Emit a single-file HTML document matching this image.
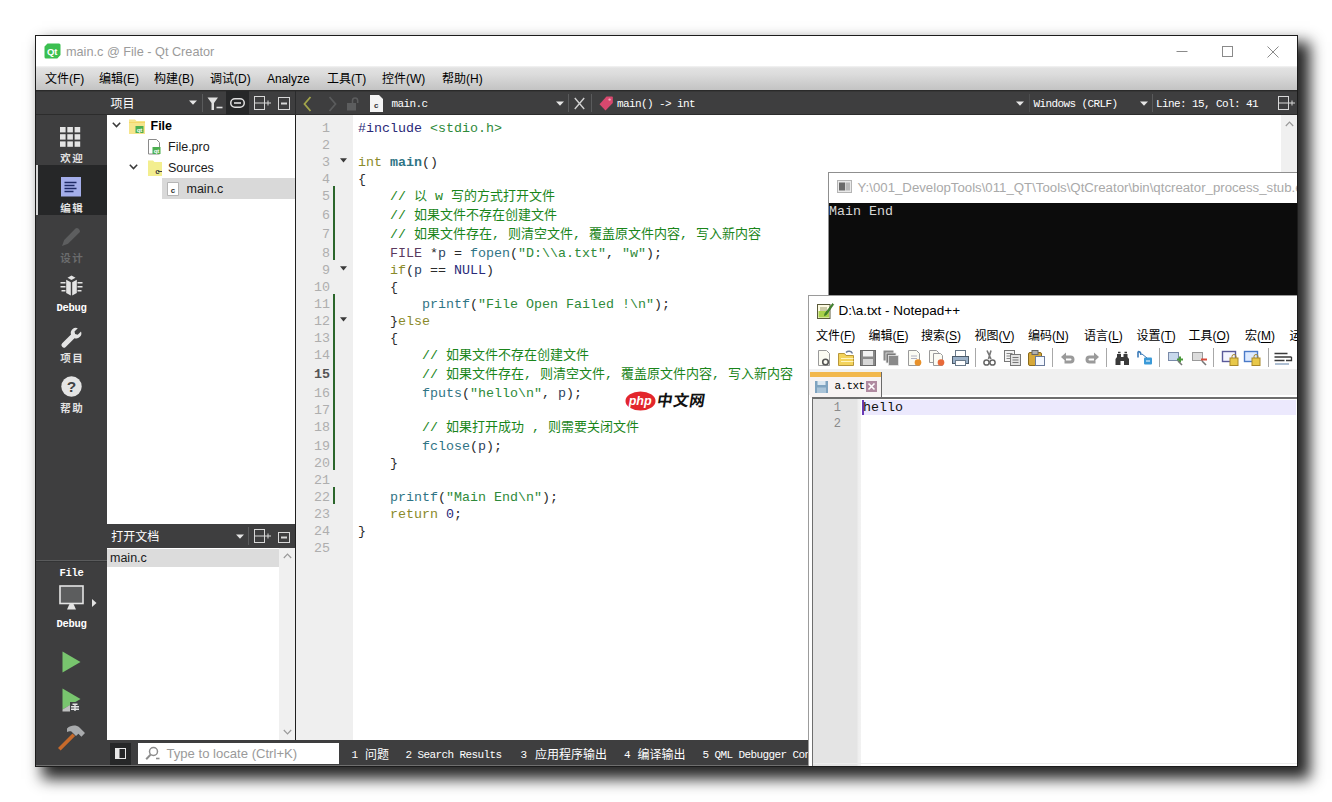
<!DOCTYPE html>
<html lang="zh-CN">
<head>
<meta charset="utf-8">
<title>main.c @ File - Qt Creator</title>
<style>
*{box-sizing:border-box;margin:0;padding:0}
html,body{width:1332px;height:802px;overflow:hidden;background:#fff}
body{position:relative;font-family:"Liberation Sans","Noto Sans CJK SC",sans-serif;font-size:13px;color:#000}
.abs,.abs-all *{position:absolute}
#win{position:absolute;left:36px;top:36px;width:1261px;height:730px;background:#fff;box-shadow:0 0 0 1px #1c1c1c,9.5px 9.5px 14px 3.5px rgba(0,0,0,.85);overflow:hidden}
#win>div,#win>svg{position:absolute}
.t{position:absolute;white-space:nowrap;line-height:1}
/* coordinates inside #win are page coords minus 36 */
#titlebar{left:0;top:0;width:1261px;height:30px;background:#fff}
#menubar{left:0;top:30px;width:1261px;height:24px;background:linear-gradient(#f4f4f4 0,#e2e2e2 2px,#dcdcdc 8px,#c3c3c3 100%)}
#toolbar{left:0;top:54px;width:1261px;height:25px;background:#3e3e3f;border-top:1px solid #2a2a2a;border-bottom:1px solid #2c2c2c;box-shadow:inset 0 3px 0 -2px #363636}
#sidebar{left:0;top:79px;width:71px;height:652px;background:#3e3e3f}
#tree{left:71px;top:79px;width:188px;height:409px;background:#fff}
#docshead{left:71px;top:488px;width:188px;height:24px;background:#3e3e3f}
#docs{left:71px;top:512px;width:188px;height:192px;background:#fff}
#split{left:259px;top:79px;width:1px;height:625px;background:#1f1f1f}
#gutter{left:260px;top:79px;width:57px;height:625px;background:#efefef}
#code{left:317px;top:79px;width:944px;height:625px;background:#fff}
#bottombar{left:71px;top:704px;width:1190px;height:25px;background:#3e3e3f}
#botline{left:0;top:729px;width:1261px;height:1px;background:#6f6f6f}

.g{color:#9a9a9a}
.w{color:#fff}
.mi{position:absolute;top:7px;font-size:12px;line-height:12px;white-space:nowrap;color:#000}
.tb{position:absolute;white-space:nowrap;color:#fff;font-size:12px;line-height:12px}
.mono{font-family:"Liberation Mono","Noto Sans CJK SC",monospace}
.ser{font-family:"Liberation Serif","Noto Serif CJK SC",serif}

.sm{position:absolute;white-space:nowrap;color:#fff;font-family:"Liberation Mono","Noto Sans CJK SC",monospace;font-size:11px;letter-spacing:-0.6px;line-height:12px}
.cj{position:absolute;white-space:nowrap;color:#fff;font-family:"Noto Sans CJK SC","Liberation Sans",sans-serif;font-size:12px;line-height:12px}
.sep{position:absolute;width:1px;background:#5a5b5c}
.ic{position:absolute;overflow:visible}

.ml{position:absolute;left:0;width:71px;text-align:center;white-space:nowrap;color:#e2e2e2;font-weight:bold;font-size:10.5px;letter-spacing:1.5px;text-indent:1.5px;line-height:12px;font-family:"Noto Sans CJK SC","Liberation Sans",sans-serif}
.mlm{position:absolute;left:0;width:71px;text-align:center;white-space:nowrap;color:#fff;font-weight:bold;font-family:"Liberation Mono",monospace;font-size:10.5px;letter-spacing:-0.3px;line-height:12px}

.tr{position:absolute;white-space:nowrap;font-size:12.5px;line-height:14px;color:#1a1a1a}
.ln{position:absolute;left:0;width:34px;text-align:right;height:17.47px;line-height:17.47px;font-family:"Liberation Mono",monospace;font-size:13.33px;color:#aeaeae;white-space:pre}
.cl{position:absolute;left:5px;height:17.47px;line-height:17.47px;font-family:"Liberation Mono","Noto Sans CJK SC",monospace;font-size:13.33px;color:#2b2b2b;white-space:pre}
.cl i{line-height:0;font-style:normal;font-family:"Noto Sans CJK SC",sans-serif;font-size:13px}
.k{color:#8a8a2a}.s{color:#2e8a3a}.c{color:#1a851a}.p{color:#2a2a78}.f{color:#2f7485}.ty{color:#5a3a5e}.v{color:#2a3f62}
.bar{position:absolute;left:37px;width:2px;background:#2b662b}
.fold{position:absolute;left:44px}

#con{left:792px;top:136px;width:469px;height:124px;background:#0c0c0c;border-left:1px solid #8f8f8f;border-top:1px solid #8f8f8f}
#con>*{position:absolute}
#npp{left:772px;top:259px;width:489px;height:472px;background:#fff;border-left:1px solid #9c9c9c;border-top:1px solid #9a9a9a}
#npp>*{position:absolute}
.nm{position:absolute;top:33px;font-size:12px;line-height:14px;white-space:nowrap;color:#000}
.nm u{text-decoration-thickness:1px;text-underline-offset:1.5px}
#wm{left:588px;top:354px;width:84px;height:22px}
#wm>*{position:absolute}
</style>
</head>
<body>
<div id="win">
  <div id="titlebar">
    <svg style="position:absolute;left:7.5px;top:6.5px" width="17" height="16" viewBox="0 0 17 16"><path d="M3.5 0.5H15a1.5 1.5 0 0 1 1.5 1.5V12l-3.2 3.5H2a1.5 1.5 0 0 1-1.5-1.5V3.5z" fill="#3bbf50"/><text x="8.2" y="11.6" font-family="Liberation Sans,sans-serif" font-weight="bold" font-size="9.5" fill="#fff" text-anchor="middle">Qt</text></svg>
    <div class="t" id="ttl" style="left:30px;top:9px;font-size:12.7px;line-height:14px;color:#9b9b9b">main.c @ File - Qt Creator</div>
    <svg style="position:absolute;left:1140px;top:9px" width="110" height="14" viewBox="0 0 110 14" fill="none" stroke="#8a8a8a" stroke-width="1"><path d="M0.5 6.5H11.5"/><rect x="46.5" y="1.5" width="10" height="10"/><path d="M91.5 1.5l11 11M102.5 1.5l-11 11"/></svg>
  </div>
  <div id="menubar">
    <div class="mi" style="left:9px">文件(F)</div>
    <div class="mi" style="left:63px">编辑(E)</div>
    <div class="mi" style="left:118px">构建(B)</div>
    <div class="mi" style="left:174px">调试(D)</div>
    <div class="mi" style="left:231px">Analyze</div>
    <div class="mi" style="left:291px">工具(T)</div>
    <div class="mi" style="left:346px">控件(W)</div>
    <div class="mi" style="left:406px">帮助(H)</div>
  </div>
  <div id="toolbar">
    <div class="cj" style="left:74.5px;top:6px">项目</div>
    <svg class="ic" style="left:153px;top:9px" width="8" height="5" viewBox="0 0 8 5"><path d="M0 0.5h8L4 4.8z" fill="#e6e6e6"/></svg>
    <div class="sep" style="left:166px;top:3px;height:18px"></div>
    <svg class="ic" style="left:171px;top:6px" width="16" height="14" viewBox="0 0 16 14"><path d="M0.5 0.5h10.5L7 6v7H4.5V6z" fill="#e0e0e0"/><path d="M9.5 10.5h6" stroke="#e0e0e0" stroke-width="1.6"/></svg>
    <div style="position:absolute;left:190px;top:0;width:23px;height:24px;background:#262728"></div>
    <svg class="ic" style="left:194px;top:7px" width="15" height="10" viewBox="0 0 15 10" fill="none" stroke="#e0e0e0"><rect x="0.75" y="0.75" width="13.5" height="8.5" rx="4.2" stroke-width="1.5"/><path d="M4 5H11" stroke-width="1.6"/></svg>
    <svg class="ic" style="left:218px;top:5px" width="18" height="14" viewBox="0 0 18 14" fill="none" stroke="#d8d8d8" stroke-width="1"><rect x="0.5" y="0.5" width="10" height="13"/><path d="M0.5 7H10.5M11 7H17M14 4.5V9.5"/></svg>
    <svg class="ic" style="left:241.5px;top:6px" width="12" height="13" viewBox="0 0 12 13" fill="none" stroke="#d8d8d8" stroke-width="1"><rect x="0.5" y="0.5" width="11" height="12"/><path d="M3 6.5H9" stroke-width="2"/></svg>
    <div style="position:absolute;left:259px;top:0;width:1px;height:24px;background:#2a2b2c"></div>
    <svg class="ic" style="left:267px;top:5px" width="9" height="16" viewBox="0 0 9 16" fill="none"><path d="M7.5 1L1.5 8l6 7" stroke="#a3a54a" stroke-width="1.8"/></svg>
    <svg class="ic" style="left:292px;top:5px" width="9" height="16" viewBox="0 0 9 16" fill="none"><path d="M1.5 1l6 7-6 7" stroke="#5a5b5c" stroke-width="1.8"/></svg>
    <svg class="ic" style="left:310px;top:6px" width="13" height="14" viewBox="0 0 13 14" fill="none"><rect x="1" y="6" width="9" height="7.5" fill="#5c5d5e"/><path d="M6.5 6V3.5a2.6 2.6 0 0 1 5.2 0V6" stroke="#5c5d5e" stroke-width="1.5"/></svg>
    <svg class="ic" style="left:334px;top:4px" width="13" height="17" viewBox="0 0 13 17"><path d="M0 0h9l4 4v13H0z" fill="#f4f4f4"/><text x="6.3" y="12.5" font-family="Liberation Sans,sans-serif" font-weight="bold" font-size="8" fill="#333" text-anchor="middle">c</text></svg>
    <div class="sm" style="left:355.5px;top:7px">main.c</div>
    <svg class="ic" style="left:519.5px;top:10px" width="8" height="5" viewBox="0 0 8 5"><path d="M0 0.5h8L4 4.8z" fill="#e6e6e6"/></svg>
    <div class="sep" style="left:532px;top:3px;height:18px"></div>
    <svg class="ic" style="left:538px;top:6px" width="11" height="13" viewBox="0 0 11 13" fill="none" stroke="#d0d0d0" stroke-width="1.4"><path d="M0.8 1l9.4 11M10.2 1L0.8 12"/></svg>
    <div class="sep" style="left:555px;top:3px;height:18px"></div>
    <svg class="ic" style="left:563px;top:5px" width="14" height="15" viewBox="0 0 14 15"><path d="M7.5 0.5h5.5a0.8 0.8 0 0 1 .8.8V7L6.5 14.5.5 8.2z" fill="#d9486e"/><circle cx="10.6" cy="3.6" r="1.2" fill="#f3a6b8"/></svg>
    <div class="sm" style="left:581px;top:7px">main() -&gt; int</div>
    <svg class="ic" style="left:980px;top:10px" width="8" height="5" viewBox="0 0 8 5"><path d="M0 0.5h8L4 4.8z" fill="#e6e6e6"/></svg>
    <div class="sep" style="left:993px;top:3px;height:18px;background:#4c4d4e"></div>
    <div class="sm" style="left:997.5px;top:7px">Windows (CRLF)</div>
    <svg class="ic" style="left:1103.5px;top:10px" width="8" height="5" viewBox="0 0 8 5"><path d="M0 0.5h8L4 4.8z" fill="#e6e6e6"/></svg>
    <div class="sep" style="left:1116px;top:3px;height:18px"></div>
    <div class="sm" style="left:1120px;top:7px">Line: 15, Col: 41</div>
    <svg class="ic" style="left:1242px;top:5px" width="18" height="14" viewBox="0 0 18 14" fill="none" stroke="#d8d8d8" stroke-width="1"><rect x="0.5" y="0.5" width="10" height="13"/><path d="M0.5 7H10.5M11 7H17M14 4.5V9.5"/></svg>
  </div>
  <div id="sidebar">
    <svg class="ic" style="left:24px;top:11.5px" width="21" height="20" viewBox="0 0 21 20" fill="#e4e4e4"><rect x="0.0" y="0.0" width="5.6" height="5.4"/><rect x="7.3" y="0.0" width="5.6" height="5.4"/><rect x="14.6" y="0.0" width="5.6" height="5.4"/><rect x="0.0" y="7.2" width="5.6" height="5.4"/><rect x="7.3" y="7.2" width="5.6" height="5.4"/><rect x="14.6" y="7.2" width="5.6" height="5.4"/><rect x="0.0" y="14.4" width="5.6" height="5.4"/><rect x="7.3" y="14.4" width="5.6" height="5.4"/><rect x="14.6" y="14.4" width="5.6" height="5.4"/></svg>
    <div class="ml" style="top:37px">欢迎</div>
    <div style="position:absolute;left:0;top:50px;width:71px;height:49.5px;background:#262728"></div>
    <div style="position:absolute;left:0;top:50px;width:2px;height:49.5px;background:#d8d8d8"></div>
    <svg class="ic" style="left:24.5px;top:61.5px" width="20" height="20" viewBox="0 0 20 20"><rect width="20" height="19.5" fill="#a4aeea"/><path d="M3.5 5.5h12M3.5 8.5h10M3.5 11.5h12M3.5 14.5h9" stroke="#1e2a66" stroke-width="1.3"/></svg>
    <div class="ml" style="top:87px">编辑</div>
    <svg class="ic" style="left:24px;top:111px" width="22" height="22" viewBox="0 0 22 22"><path d="M2 20l2.2-6L15.5 2.6a2 2 0 0 1 2.8 0l1.1 1.1a2 2 0 0 1 0 2.8L8 17.8z" fill="#5d5e5f"/></svg>
    <div class="ml" style="top:137px;color:#6b6c6d">设计</div>
    <svg class="ic" style="left:24px;top:160px" width="23" height="22" viewBox="0 0 23 22" fill="#e4e4e4"><path d="M11.5 0.5l4 2.2-4 2.2-4-2.2z"/><path d="M6.2 4.8l4.6 2.4v13.3l-4.6-2.6z"/><path d="M16.8 4.8l-4.6 2.4v13.3l4.6-2.6z"/><path d="M0.5 7h5v1.6h-5zM0.5 11h5v1.6h-5zM1.5 15h4v1.6h-4zM17.5 7h5v1.6h-5zM17.5 11h5v1.6h-5zM17.5 15h4v1.6h-4z"/></svg>
    <div class="mlm" style="top:187px">Debug</div>
    <svg class="ic" style="left:24px;top:211px" width="22" height="22" viewBox="0 0 22 22"><path d="M2.2 17.3L11 8.6a5.2 5.2 0 0 1 6.8-6.4l-3.3 3.3 0.6 2.6 2.6 0.6 3.3-3.3a5.2 5.2 0 0 1-6.5 6.8L5.7 20.9a2.4 2.4 0 0 1-3.5-3.6z" fill="#e4e4e4"/></svg>
    <div class="ml" style="top:237px">项目</div>
    <svg class="ic" style="left:25px;top:261px" width="21" height="21" viewBox="0 0 21 21"><circle cx="10.5" cy="10.5" r="10.2" fill="#e4e4e4"/><text x="10.5" y="16" font-family="Liberation Sans,sans-serif" font-weight="bold" font-size="15.5" fill="#404244" text-anchor="middle">?</text></svg>
    <div class="ml" style="top:287px">帮助</div>
    <div style="position:absolute;left:0;top:445px;width:71px;height:1px;background:#5a5b5c"></div>
    <div style="position:absolute;left:0;top:446px;width:71px;height:1px;background:#333435"></div>
    <div class="mlm" style="top:452px">File</div>
    <svg class="ic" style="left:23px;top:470px" width="25" height="25" viewBox="0 0 25 25"><rect x="1" y="1" width="23" height="17.5" fill="#5c5d5e" stroke="#e4e4e4" stroke-width="1.6"/><path d="M8 24.5l2.5-5.5h4l2.5 5.5z" fill="#e4e4e4"/></svg>
    <svg class="ic" style="left:55.5px;top:484px" width="5" height="8" viewBox="0 0 5 8"><path d="M0 0l4.5 4L0 8z" fill="#e4e4e4"/></svg>
    <div class="mlm" style="top:503px">Debug</div>
    <svg class="ic" style="left:25.5px;top:536px" width="19" height="22" viewBox="0 0 19 22"><path d="M0.5 0.5L18.5 11 0.5 21.5z" fill="#78c56e"/></svg>
    <svg class="ic" style="left:25.5px;top:573px" width="20" height="24" viewBox="0 0 20 24"><path d="M0.5 0.5L18.5 11 0.5 21.5z" fill="#78c56e"/><path d="M0.5 21.5L8 17v6.5H0.5z" fill="#bfc0c0"/><rect x="8" y="14" width="10" height="9.5" fill="#404244"/><path d="M10.5 15.5h5v1.5h-5zM9 18h8v1.4H9zM9 20.6h8V22H9zM12.3 15.5h1.4V23h-1.4z" fill="#e4e4e4"/></svg>
    <svg class="ic" style="left:20px;top:610px" width="30" height="27" viewBox="0 0 30 27"><path d="M2 24.5L16.5 10l2.6 2.6L4.6 27z" fill="#c76a2b" transform="translate(0,-1.5)"/><path d="M11 4.5c4-3.5 9-3.8 12.5-1l5.5 5.6-3.6 3.6-3-3-2.4 2.4-4.6-4.6c-1.4-0.6-2.8-0.4-4.4 0.4z" fill="#a9abad" transform="translate(0,-1)"/></svg>
  </div>
  <div id="tree">
    <svg class="ic" style="left:4.5px;top:7px" width="9" height="6" viewBox="0 0 9 6" fill="none"><path d="M0.8 0.8L4.5 4.6 8.2 0.8" stroke="#3a3a3a" stroke-width="1.5"/></svg>
    <svg class="ic" style="left:21.5px;top:3px" width="16" height="17" viewBox="0 0 16 17"><path d="M0 1.5h6l1.5 1.5H16v13H0z" fill="#f6e58d"/><path d="M0 4.5h16" stroke="#f3d76a"/><rect x="6.5" y="8" width="8" height="7" fill="#4caf50"/><text x="10.5" y="14" font-size="6" font-family="Liberation Sans,sans-serif" fill="#fff" text-anchor="middle" font-weight="bold">qt</text></svg>
    <div class="tr" style="left:43.5px;top:4px;font-weight:bold;color:#000">File</div>
    <svg class="ic" style="left:41px;top:23.5px" width="13" height="16" viewBox="0 0 13 16"><path d="M0.5 0.5h8l3 3v11.5h-11z" fill="#fff" stroke="#8a8a8a"/><rect x="4.5" y="8" width="8" height="7" fill="#4caf50"/><text x="8.5" y="14" font-size="6" font-family="Liberation Sans,sans-serif" fill="#fff" text-anchor="middle" font-weight="bold">qt</text></svg>
    <div class="tr" style="left:61px;top:25px">File.pro</div>
    <svg class="ic" style="left:22px;top:49px" width="9" height="6" viewBox="0 0 9 6" fill="none"><path d="M0.8 0.8L4.5 4.6 8.2 0.8" stroke="#3a3a3a" stroke-width="1.5"/></svg>
    <svg class="ic" style="left:40.5px;top:45px" width="14" height="16" viewBox="0 0 14 16"><path d="M0 0.5h5l1.5 1.5H14v14H0z" fill="#f3ee8f"/><text x="9.5" y="14" font-size="8" font-family="Liberation Sans,sans-serif" fill="#444" text-anchor="middle" font-weight="bold">c</text><path d="M10 11.5h4" stroke="#444"/></svg>
    <div class="tr" style="left:61px;top:46px">Sources</div>
    <div style="position:absolute;left:55px;top:63px;width:133px;height:21px;background:#d9d9d9"></div>
    <svg class="ic" style="left:60px;top:66.5px" width="12" height="14" viewBox="0 0 12 14"><path d="M0.5 0.5h11v13h-11z" fill="#fff" stroke="#b5b5b5"/><text x="6" y="10.5" font-size="8" font-family="Liberation Sans,sans-serif" fill="#333" text-anchor="middle" font-weight="bold">c</text></svg>
    <div class="tr" style="left:79.5px;top:67px">main.c</div>
  </div>
  <div id="docshead">
    <div class="cj" style="left:4.3px;top:6px">打开文档</div>
    <svg class="ic" style="left:128.5px;top:9.5px" width="8" height="5" viewBox="0 0 8 5"><path d="M0 0.5h8L4 4.8z" fill="#e6e6e6"/></svg>
    <div class="sep" style="left:141px;top:3px;height:18px"></div>
    <svg class="ic" style="left:147px;top:5px" width="18" height="14" viewBox="0 0 18 14" fill="none" stroke="#d8d8d8" stroke-width="1"><rect x="0.5" y="0.5" width="10" height="13"/><path d="M0.5 7H10.5M11 7H17M14 4.5V9.5"/></svg>
    <svg class="ic" style="left:171px;top:7.5px" width="12" height="11" viewBox="0 0 12 11" fill="none" stroke="#d8d8d8" stroke-width="1"><rect x="0.5" y="0.5" width="11" height="10"/><path d="M3 5.5H9" stroke-width="2"/></svg>
  </div>
  <div id="docs">
    <div style="position:absolute;left:0;top:1px;width:172px;height:18px;background:#dcdcdc"></div>
    <div class="tr" style="left:3px;top:2.5px">main.c</div>
    <div style="position:absolute;left:172px;top:0;width:16px;height:192px;background:#f0f0f0"></div>
    <svg class="ic" style="left:176px;top:5px" width="9" height="6" viewBox="0 0 9 6" fill="none"><path d="M0.8 5L4.5 1.2 8.2 5" stroke="#9a9a9a" stroke-width="1.2"/></svg>
    <svg class="ic" style="left:176px;top:180.5px" width="9" height="6" viewBox="0 0 9 6" fill="none"><path d="M0.8 1L4.5 4.8 8.2 1" stroke="#9a9a9a" stroke-width="1.2"/></svg>
  </div>
  <div id="split"></div>
  <div id="gutter">
    <div class="ln" style="top:5.00px">1</div>
    <div class="ln" style="top:22.00px">2</div>
    <div class="ln" style="top:39.00px">3</div>
    <div class="ln" style="top:56.00px">4</div>
    <div class="ln" style="top:73.00px">5</div>
    <div class="ln" style="top:92.00px">6</div>
    <div class="ln" style="top:111.00px">7</div>
    <div class="ln" style="top:130.00px">8</div>
    <div class="ln" style="top:147.00px">9</div>
    <div class="ln" style="top:164.00px">10</div>
    <div class="ln" style="top:181.00px">11</div>
    <div class="ln" style="top:198.00px">12</div>
    <div class="ln" style="top:215.00px">13</div>
    <div class="ln" style="top:232.00px">14</div>
    <div class="ln" style="top:251.00px;color:#555;font-weight:bold">15</div>
    <div class="ln" style="top:270.00px">16</div>
    <div class="ln" style="top:287.00px">17</div>
    <div class="ln" style="top:304.00px">18</div>
    <div class="ln" style="top:323.00px">19</div>
    <div class="ln" style="top:340.00px">20</div>
    <div class="ln" style="top:357.00px">21</div>
    <div class="ln" style="top:374.00px">22</div>
    <div class="ln" style="top:391.00px">23</div>
    <div class="ln" style="top:408.00px">24</div>
    <div class="ln" style="top:425.00px">25</div>
    <div class="bar" style="top:71.00px;height:74.00px"></div>
    <div class="bar" style="top:179.00px;height:176.00px"></div>
    <div class="bar" style="top:372.00px;height:17.00px"></div>
    <svg class="ic fold" style="top:43.30px" width="7" height="5" viewBox="0 0 7 5"><path d="M0 0.3h7L3.5 4.6z" fill="#3a3a3a"/></svg>
    <svg class="ic fold" style="top:151.30px" width="7" height="5" viewBox="0 0 7 5"><path d="M0 0.3h7L3.5 4.6z" fill="#3a3a3a"/></svg>
    <svg class="ic fold" style="top:202.30px" width="7" height="5" viewBox="0 0 7 5"><path d="M0 0.3h7L3.5 4.6z" fill="#3a3a3a"/></svg>
  </div>
  <div id="code">
    <div class="cl" style="top:5.00px"><span class="p">#include</span> <span class="s">&lt;stdio.h&gt;</span></div>
    <div class="cl" style="top:39.00px"><span class="k">int</span> <b class="f">main</b>()</div>
    <div class="cl" style="top:56.00px">{</div>
    <div class="cl" style="top:73.00px">    <span class="c">// <i>以</i> w <i>写的方式打开文件</i></span></div>
    <div class="cl" style="top:92.00px">    <span class="c">// <i>如果文件不存在创建文件</i></span></div>
    <div class="cl" style="top:111.00px">    <span class="c">// <i>如果文件存在</i>, <i>则清空文件</i>, <i>覆盖原文件内容</i>, <i>写入新内容</i></span></div>
    <div class="cl" style="top:130.00px">    <span class="ty">FILE</span> *<span class="v">p</span> = <span class="f">fopen</span>(<span class="s">"D:\\a.txt"</span>, <span class="s">"w"</span>);</div>
    <div class="cl" style="top:147.00px">    <span class="k">if</span>(<span class="v">p</span> == <span class="p">NULL</span>)</div>
    <div class="cl" style="top:164.00px">    {</div>
    <div class="cl" style="top:181.00px">        <span class="f">printf</span>(<span class="s">"File Open Failed !\n"</span>);</div>
    <div class="cl" style="top:198.00px">    }<span class="k">else</span></div>
    <div class="cl" style="top:215.00px">    {</div>
    <div class="cl" style="top:232.00px">        <span class="c">// <i>如果文件不存在创建文件</i></span></div>
    <div class="cl" style="top:251.00px">        <span class="c">// <i>如果文件存在</i>, <i>则清空文件</i>, <i>覆盖原文件内容</i>, <i>写入新内容</i></span></div>
    <div class="cl" style="top:270.00px">        <span class="f">fputs</span>(<span class="s">"hello\n"</span>, <span class="v">p</span>);</div>
    <div class="cl" style="top:304.00px">        <span class="c">// <i>如果打开成功</i> , <i>则需要关闭文件</i></span></div>
    <div class="cl" style="top:323.00px">        <span class="f">fclose</span>(<span class="v">p</span>);</div>
    <div class="cl" style="top:340.00px">    }</div>
    <div class="cl" style="top:374.00px">    <span class="f">printf</span>(<span class="s">"Main End\n"</span>);</div>
    <div class="cl" style="top:391.00px">    <span class="k">return</span> <span class="p">0</span>;</div>
    <div class="cl" style="top:408.00px">}</div>
    <div style="position:absolute;left:927.5px;top:0;width:16.5px;height:627px;background:#f0f0f0"></div>
    <svg class="ic" style="left:931.5px;top:5.5px" width="9" height="6" viewBox="0 0 9 6" fill="none"><path d="M0.8 5L4.5 1.2 8.2 5" stroke="#9a9a9a" stroke-width="1.2"/></svg>
  </div>
  <div id="con">
    <div style="left:0;top:0;width:468px;height:30px;background:#fff"></div>
    <svg class="ic" style="left:8px;top:7px" width="15" height="13" viewBox="0 0 15 13"><rect x="0.5" y="0.5" width="14" height="12" fill="#e9e9e9" stroke="#b4b4b4"/><rect x="2" y="2.5" width="6" height="8" fill="#6a6a6a"/><rect x="8.5" y="2.5" width="4.5" height="8" fill="#b9b9b9"/></svg>
    <div class="t" id="contitle" style="left:28.5px;top:8px;font-size:13.22px;line-height:14px;color:#a9a9a9">Y:\001_DevelopTools\011_QT\Tools\QtCreator\bin\qtcreator_process_stub.exe</div>
    <div class="t mono" id="context" style="left:0;top:31px;font-size:13.33px;line-height:16px;color:#d6d6d6">Main End</div>
  </div>
  <div id="wm">
    <svg class="ic" style="left:0.8px;top:0.5px" width="31" height="20" viewBox="0 0 31 20"><ellipse cx="15.500" cy="10" rx="15" ry="9.600" fill="#e3262c"/><text x="15.200" y="13.800" font-family="Liberation Sans,sans-serif" font-style="italic" font-weight="bold" font-size="12.500" fill="#fff" text-anchor="middle">php</text></svg>
    <div class="t" style="left:33px;top:2.5px;font-size:15.6px;line-height:16px;font-weight:bold;transform:skewX(-9deg);letter-spacing:.6px;color:#111;font-family:'Liberation Sans','Noto Sans CJK SC',sans-serif">中文网</div>
  </div>
  <div id="bottombar">
    <div style="position:absolute;left:3px;top:3px;width:21px;height:23px;background:#262728"></div>
    <svg class="ic" style="left:8px;top:8px" width="11" height="11" viewBox="0 0 11 11"><rect x="0.5" y="0.5" width="10" height="10" fill="none" stroke="#e8e8e8"/><rect x="0" y="0" width="4.5" height="11" fill="#e8e8e8"/></svg>
    <div style="position:absolute;left:31px;top:3px;width:200.5px;height:20.5px;background:#fff"></div>
    <svg class="ic" style="left:38px;top:6px" width="16" height="15" viewBox="0 0 16 15" fill="none" stroke="#8c8c8c"><circle cx="8.5" cy="5.5" r="4" stroke-width="1.5"/><path d="M5.6 8.6L1.2 13.2" stroke-width="2"/><path d="M11 12.5h3.5" stroke-width="1.6"/></svg>
    <div class="t" id="loc" style="left:59.5px;top:7px;font-size:13.1px;line-height:14px;color:#9a9a9a">Type to locate (Ctrl+K)</div>
    <div class="sm" style="left:244.5px;top:9px">1</div><div class="cj" style="left:258px;top:8px">问题</div>
    <div class="sm" style="left:298.5px;top:9px">2</div><div class="sm" style="left:310.5px;top:9px">Search Results</div>
    <div class="sm" style="left:413.5px;top:9px">3</div><div class="cj" style="left:428px;top:8px">应用程序输出</div>
    <div class="sm" style="left:517px;top:9px">4</div><div class="cj" style="left:530.5px;top:8px">编译输出</div>
    <div class="sm" style="left:595.5px;top:9px">5</div><div class="sm" style="left:607.5px;top:9px">QML Debugger Console</div>
  </div>
  <div id="botline"></div>
<div id="npp">
    <svg class="ic" style="left:7.5px;top:6px" width="17" height="17" viewBox="0 0 17 17"><rect x="0.5" y="2.5" width="12.5" height="14" fill="#fdfbe3" stroke="#5a5a3a"/><rect x="1.5" y="9" width="10.5" height="6.5" fill="#a8d04a"/><path d="M3 6h7M3 8h7" stroke="#9a9a6a"/><path d="M8 11.5L15.5 1.5l1.2 1L9.5 12.6l-2 1z" fill="#3e8e2e" stroke="#2a5a1a" stroke-width=".6"/></svg>
    <div class="t" id="npptitle" style="left:29.5px;top:8px;font-size:13.5px;line-height:14px;color:#000">D:\a.txt - Notepad++</div>
    <div class="nm" style="left:7px">文件(<u>F</u>)</div>
    <div class="nm" style="left:59.5px">编辑(<u>E</u>)</div>
    <div class="nm" style="left:112px">搜索(<u>S</u>)</div>
    <div class="nm" style="left:165.5px">视图(<u>V</u>)</div>
    <div class="nm" style="left:219px">编码(<u>N</u>)</div>
    <div class="nm" style="left:275px">语言(<u>L</u>)</div>
    <div class="nm" style="left:327.5px">设置(<u>T</u>)</div>
    <div class="nm" style="left:379.5px">工具(<u>O</u>)</div>
    <div class="nm" style="left:436px">宏(<u>M</u>)</div>
    <div class="nm" style="left:480.5px">运行(<u>R</u>)</div>
    <svg class="ic" style="left:7px;top:53.5px" width="16" height="16" viewBox="0 0 16 16"><path d="M2.5 0.5h8l3 3v12h-11z" fill="#fbfbf3" stroke="#9a9a9a"/><circle cx="9.5" cy="12" r="2.8" fill="none" stroke="#555" stroke-width="1.6"/></svg>
    <svg class="ic" style="left:29px;top:53.5px" width="16" height="16" viewBox="0 0 16 16"><path d="M0.5 3.5h6l1.5 2h7.5v10H0.5z" fill="#f3d35c" stroke="#b8963a"/><path d="M3 8.5h12.5M3 11.5h12.5" stroke="#fff5c0"/><path d="M8 2.5a4 4 0 0 1 6.5 1" fill="none" stroke="#6a7a9a" stroke-width="1.4"/></svg>
    <svg class="ic" style="left:51px;top:53.5px" width="16" height="16" viewBox="0 0 16 16"><rect x="0.5" y="0.5" width="15" height="15" fill="#8a8a8a" stroke="#6a6a6a"/><rect x="3" y="1" width="10" height="5.5" fill="#f4f4f4"/><rect x="3" y="9" width="10" height="6" fill="#d8d8d8"/></svg>
    <svg class="ic" style="left:74px;top:53.5px" width="16" height="16" viewBox="0 0 16 16"><rect x="0.5" y="0.5" width="10" height="10" fill="#8a8a8a"/><rect x="3" y="3" width="10" height="10" fill="#7a7a7a" stroke="#e8e8e8" stroke-width=".8"/><rect x="5.5" y="5.5" width="10" height="10" fill="#8a8a8a" stroke="#e8e8e8" stroke-width=".8"/></svg>
    <svg class="ic" style="left:97px;top:53.5px" width="16" height="16" viewBox="0 0 16 16"><path d="M2.5 0.5h8l3 3v12h-11z" fill="#fbfbf3" stroke="#9a9a9a"/><path d="M5 6h6M5 8.5h6" stroke="#b0b0c0"/><circle cx="12" cy="12.5" r="3.3" fill="#e8912a"/></svg>
    <svg class="ic" style="left:120px;top:53.5px" width="16" height="16" viewBox="0 0 16 16"><path d="M0.5 0.5h7l2 2v10h-9z" fill="#fbfbf3" stroke="#9a9a9a"/><path d="M4.5 3.5h7l2 2v10h-9z" fill="#fbfbf3" stroke="#9a9a9a"/><circle cx="12" cy="12.5" r="3.3" fill="#e86a3a"/></svg>
    <svg class="ic" style="left:143px;top:53.5px" width="17" height="16" viewBox="0 0 17 16"><rect x="3.5" y="0.5" width="10" height="6" fill="#fff" stroke="#6a7a8a"/><rect x="0.5" y="6.5" width="16" height="7" fill="#9ab0c8" stroke="#4a5a6a"/><rect x="3.5" y="10.5" width="10" height="5" fill="#fff" stroke="#6a7a8a"/></svg>
    <div style="left:165.5px;top:52px;width:1px;height:19px;background:#a8a8a8"></div>
    <div style="left:243px;top:52px;width:1px;height:19px;background:#a8a8a8"></div>
    <div style="left:296.5px;top:52px;width:1px;height:19px;background:#a8a8a8"></div>
    <div style="left:350px;top:52px;width:1px;height:19px;background:#a8a8a8"></div>
    <div style="left:404px;top:52px;width:1px;height:19px;background:#a8a8a8"></div>
    <div style="left:458.5px;top:52px;width:1px;height:19px;background:#a8a8a8"></div>
    <svg class="ic" style="left:173px;top:53.5px" width="15" height="16" viewBox="0 0 15 16"><path d="M9 0.5L6.5 9M5 0.5L9 9" stroke="#777" stroke-width="1.6" fill="none"/><circle cx="4.5" cy="12.5" r="2.6" fill="none" stroke="#666" stroke-width="1.5"/><circle cx="10.5" cy="12.5" r="2.6" fill="none" stroke="#666" stroke-width="1.5"/></svg>
    <svg class="ic" style="left:195px;top:53.5px" width="18" height="16" viewBox="0 0 18 16"><rect x="0.5" y="0.5" width="10" height="11" fill="#f4f4f4" stroke="#777"/><path d="M2.5 3.5h6M2.5 6h6M2.5 8.5h6" stroke="#888"/><rect x="6.5" y="4.5" width="10" height="11" fill="#e4e4e4" stroke="#777"/><path d="M8.5 7.5h6M8.5 10h6M8.5 12.5h6" stroke="#777"/></svg>
    <svg class="ic" style="left:219px;top:53.5px" width="18" height="16" viewBox="0 0 18 16"><rect x="0.5" y="2.5" width="13" height="13" rx="1.5" fill="#d6a83a" stroke="#8a6a1a"/><rect x="4" y="0.5" width="6" height="4" fill="#b0b0b0" stroke="#666"/><rect x="7.5" y="6.5" width="9" height="9" fill="#f4f8ff" stroke="#6a7a9a"/></svg>
    <svg class="ic" style="left:251px;top:53.5px" width="16" height="16" viewBox="0 0 16 16"><path d="M1 9.5L6 5v3h4.5a4 4 0 0 1 0 8H4.5v-3h6a1 1 0 0 0 0-2H6v3z" fill="#9a9a9a" transform="translate(0,-2.5)"/></svg>
    <svg class="ic" style="left:275px;top:53.5px" width="16" height="16" viewBox="0 0 16 16"><path d="M15 9.5L10 5v3H5.5a4 4 0 0 0 0 8h6v-3h-6a1 1 0 0 1 0-2H10v3z" fill="#9a9a9a" transform="translate(0,-2.5)"/></svg>
    <svg class="ic" style="left:305.5px;top:53.5px" width="15" height="16" viewBox="0 0 15 16"><path d="M2 4h4v3h2.5V4h4v3l1.5 2v6H9V11H5.5v4H0.5V9L2 7z" fill="#3a3a3a"/><path d="M3 2.5h2.5M9.5 2.5H12" stroke="#3a3a3a" stroke-width="1.6"/></svg>
    <svg class="ic" style="left:328px;top:53.5px" width="16" height="16" viewBox="0 0 16 16"><path d="M1 1.5c2.5 0 3 1.5 3 3.5M1 1.5v6" stroke="#3a7ab8" stroke-width="1.6" fill="none"/><rect x="7" y="7.500" width="8" height="7" rx="1" fill="#3a9ad8"/><path d="M9 11h4" stroke="#fff"/><path d="M5 4l5 4" stroke="#3a7ab8"/></svg>
    <svg class="ic" style="left:359px;top:53.5px" width="16" height="16" viewBox="0 0 16 16"><rect x="0.5" y="2.5" width="10" height="8" fill="#c8d8ec" stroke="#7a8aa8"/><path d="M9 9.5h6M12 6.5v6" stroke="#4a9a3a" stroke-width="2"/><path d="M10 11l4 4" stroke="#777" stroke-width="1.6"/></svg>
    <svg class="ic" style="left:383px;top:53.5px" width="16" height="16" viewBox="0 0 16 16"><rect x="0.5" y="2.5" width="10" height="8" fill="#dcdcdc" stroke="#9a9a9a"/><path d="M9 9.500h6" stroke="#d84a3a" stroke-width="2"/><path d="M10 11l4 4" stroke="#777" stroke-width="1.6"/></svg>
    <svg class="ic" style="left:412.5px;top:53.5px" width="17" height="16" viewBox="0 0 17 16"><rect x="0.5" y="1.5" width="13" height="10" fill="#f4f4ff" stroke="#5a5a9a" stroke-width="1.4"/><rect x="8" y="8" width="8" height="7.5" fill="#e8c84a" stroke="#a8882a"/><path d="M10 8V6.500a2 2 0 0 1 4 0V8" fill="none" stroke="#a8882a"/></svg>
    <svg class="ic" style="left:435px;top:53.5px" width="17" height="16" viewBox="0 0 17 16"><rect x="0.5" y="1.5" width="13" height="10" fill="#dceaff" stroke="#4a7ac8" stroke-width="1.4"/><rect x="8" y="8" width="8" height="7.5" fill="#e8c84a" stroke="#a8882a"/><path d="M10 8V6.500a2 2 0 0 1 4 0V8" fill="none" stroke="#a8882a"/></svg>
    <svg class="ic" style="left:465px;top:53.5px" width="19" height="16" viewBox="0 0 19 16"><path d="M0.5 3.5h13M0.5 7h17M0.5 10.5h10M12 10.500h5.500v-3.500" stroke="#3a3a3a" stroke-width="1.3" fill="none"/><path d="M1 14h14" stroke="#9ab0c8" stroke-width="1.6"/></svg>
    <div style="left:0;top:73px;width:488px;height:26px;background:#f0f0f0"></div>
    <div style="left:1px;top:75.5px;width:72px;height:26px;background:#f7f3f3;border-right:1px solid #6a6a6a"></div>
    <div style="left:1px;top:75.5px;width:71px;height:5px;background:#f2b84e"></div>
    <svg class="ic" style="left:6px;top:84.5px" width="13" height="12" viewBox="0 0 13 12"><rect width="13" height="12" fill="#7fa3c0"/><rect x="2.5" y="0" width="8" height="4" fill="#dbe7f1"/><rect x="2" y="6.5" width="9" height="5.5" fill="#a9c3d8"/></svg>
    <div class="t sm" id="tabtxt" style="left:25.5px;top:83.5px;color:#000">a.txt</div>
    <svg class="ic" style="left:56.5px;top:84.5px" width="11" height="11" viewBox="0 0 11 11"><rect width="11" height="11" fill="#b08aa0"/><path d="M2.5 2.5l6 6M8.500 2.500l-6 6" stroke="#fff" stroke-width="1.6"/></svg>
    <div style="left:3px;top:101px;width:485px;height:2px;background:#6e6e6e"></div>
    <div style="left:3px;top:101px;width:1px;height:371px;background:#6e6e6e"></div>
    <div style="left:4px;top:103px;width:47.5px;height:369px;background:linear-gradient(90deg,#e4e4e4 0,#e4e4e4 44px,#eeeeee 45px,#f2f2f2 100%)"></div>
    <div style="left:52.5px;top:103.5px;width:434.5px;height:15px;background:#ece9fd"></div>
    <div style="left:53px;top:103.5px;width:1.5px;height:15.5px;background:#6a3ab8"></div>
    <div class="t mono" style="left:4px;width:28px;text-align:right;top:103.5px;font-size:12px;line-height:16px;color:#8a8a8a">1</div>
    <div class="t mono" style="left:4px;width:28px;text-align:right;top:119.5px;font-size:12px;line-height:16px;color:#8a8a8a">2</div>
    <div class="t mono" id="hello" style="left:54px;top:103.5px;font-size:13.33px;line-height:16px;color:#111">hello</div>
    <div style="left:4px;top:467px;width:484px;height:1px;background:#ececec"></div>
  </div>
</div>
</body>
</html>
